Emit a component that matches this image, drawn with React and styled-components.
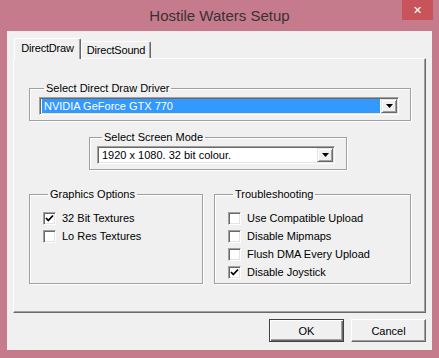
import React from "react";
import styled, { createGlobalStyle } from "styled-components";

const GlobalStyle = createGlobalStyle`
  html, body {
    margin: 0;
    padding: 0;
    background: #c57b8b;
  }
  body {
    font-family: "Liberation Sans", Arial, sans-serif;
    font-size: 11px;
    color: #000;
  }
`;

function CheckMark() {
  return (
    <svg width="9" height="9" viewBox="0 0 9 9">
      <path d="M1 4 L3.3 6.5 L8 1.5" fill="none" stroke="#000" strokeWidth="1.8" />
    </svg>
  );
}

function Arrow() {
  return (
    <svg width="7" height="4" viewBox="0 0 7 4">
      <path d="M0 0 H7 L3.5 4 Z" fill="#000" />
    </svg>
  );
}

function Combo({ value, selected, width }) {
  return (
    <ComboBox width={width}>
      <ComboValue selected={selected}>{value}</ComboValue>
      <DropButton><Arrow /></DropButton>
    </ComboBox>
  );
}

function Option({ label, checked }) {
  return (
    <OptionRow>
      <Check>{checked && <CheckMark />}</Check>
      <span>{label}</span>
    </OptionRow>
  );
}

export default function App() {
  return (
    <>
      <GlobalStyle />
      <Window>
        <TitleBar>
          <Title>Hostile Waters Setup</Title>
          <CloseButton>✕</CloseButton>
        </TitleBar>
        <Client>
          <TabStrip>
            <Tab active>DirectDraw</Tab>
            <Tab>DirectSound</Tab>
          </TabStrip>
          <Panel>
            <Group pl={9} width={382}>
              <Legend>Select Direct Draw Driver</Legend>
              <Combo value="NVIDIA GeForce GTX 770" selected width={360} />
            </Group>
            <Group pl={7} width={258} offset={60} top={10}>
              <Legend>Select Screen Mode</Legend>
              <Combo value="1920 x 1080. 32 bit colour." width={238} />
            </Group>
            <OptionsRow>
              <OptionsGroup>
                <Legend>Graphics Options</Legend>
                <Option label="32 Bit Textures" checked />
                <Option label="Lo Res Textures" />
              </OptionsGroup>
              <OptionsGroup>
                <Legend>Troubleshooting</Legend>
                <Option label="Use Compatible Upload" />
                <Option label="Disable Mipmaps" />
                <Option label="Flush DMA Every Upload" />
                <Option label="Disable Joystick" checked />
              </OptionsGroup>
            </OptionsRow>
          </Panel>
          <ButtonBar>
            <Button primary>OK</Button>
            <Button>Cancel</Button>
          </ButtonBar>
        </Client>
      </Window>
    </>
  );
}

const Window = styled.div`
  width: 439px;
  height: 358px;
  display: flex;
  flex-direction: column;
  background: #c57b8b;
  box-sizing: border-box;
`;

const TitleBar = styled.div`
  height: 31px;
  display: grid;
  grid-template-columns: 1fr auto 1fr;
`;

const Title = styled.div`
  grid-column: 2;
  align-self: center;
  margin-top: -1px;
  font-size: 15px;
  color: #3b3035;
`;

const CloseButton = styled.div`
  grid-column: 3;
  justify-self: end;
  align-self: start;
  width: 31px;
  height: 20px;
  margin-right: 6px;
  background: #c7545b;
  color: #fff;
  font-family: "DejaVu Sans", sans-serif;
  font-size: 11px;
  font-weight: bold;
  display: flex;
  align-items: center;
  justify-content: center;
`;

const Client = styled.div`
  flex: 1;
  margin: 0 7px 8px 7px;
  background: #f0f0f0;
  padding: 7px 6px 8px 6px;
  display: flex;
  flex-direction: column;
`;

const TabStrip = styled.div`
  height: 20px;
  display: flex;
  padding-left: 1px;
`;

const Tab = styled.div`
  box-sizing: border-box;
  width: ${p => (p.active ? 67 : 70)}px;
  height: ${p => (p.active ? 21 : 17)}px;
  margin-top: ${p => (p.active ? 0 : 3)}px;
  position: relative;
  z-index: ${p => (p.active ? 1 : 0)};
  background: #f0f0f0;
  border-top: 1px solid #fff;
  border-left: 1px solid #fff;
  border-right: 1px solid #696969;
  border-radius: 2px 2px 0 0;
  box-shadow: inset -1px 0 0 #a0a0a0;
  display: flex;
  align-items: ${p => (p.active ? "flex-start" : "center")};
  padding-top: ${p => (p.active ? 3 : 0)}px;
  justify-content: center;
  letter-spacing: -0.2px;
`;

const Panel = styled.div`
  box-sizing: border-box;
  height: 255px;
  border-top: 1px solid #fff;
  border-left: 1px solid #fff;
  border-right: 1px solid #696969;
  border-bottom: 1px solid #696969;
  box-shadow: inset -1px -1px 0 #a0a0a0;
  padding: 23px 14px 0 15px;
  display: flex;
  flex-direction: column;
`;

const Group = styled.fieldset`
  box-sizing: border-box;
  margin: ${p => p.top || 0}px 0 0 ${p => p.offset || 0}px;
  width: ${p => p.width}px;
  min-width: 0;
  padding: 3px 11px 5px ${p => p.pl}px;
  border: 1px solid #a0a0a0;
  box-shadow: 1px 1px 0 #fff, inset 1px 1px 0 #fff;
`;

const Legend = styled.legend`
  margin-left: 5px;
  padding: 0 2px;
  line-height: 12px;
  font-size: 11px;
`;

const ComboBox = styled.div`
  box-sizing: border-box;
  width: ${p => p.width}px;
  height: 18px;
  display: flex;
  background: #fff;
  border-top: 1px solid #a0a0a0;
  border-left: 1px solid #a0a0a0;
  border-right: 1px solid #fff;
  border-bottom: 1px solid #fff;
  box-shadow: inset 1px 1px 0 #696969, inset -1px -1px 0 #e3e3e3;
  padding: 1px;
`;

const ComboValue = styled.div`
  flex: 1;
  line-height: 14px;
  padding-left: 2px;
  margin-left: 1px;
  background: ${p => (p.selected ? "#3399ff" : "transparent")};
  color: ${p => (p.selected ? "#fff" : "#000")};
  white-space: nowrap;
`;

const DropButton = styled.div`
  box-sizing: border-box;
  width: 16px;
  margin-left: 1px;
  background: #f0f0f0;
  border-top: 1px solid #e3e3e3;
  border-left: 1px solid #e3e3e3;
  border-right: 1px solid #696969;
  border-bottom: 1px solid #696969;
  box-shadow: inset 1px 1px 0 #fff, inset -1px -1px 0 #a0a0a0;
  display: flex;
  align-items: center;
  justify-content: center;
`;

const OptionsRow = styled.div`
  margin-top: 18px;
  display: grid;
  grid-template-columns: 174px 197px;
  column-gap: 11px;
`;

const OptionsGroup = styled.fieldset`
  box-sizing: border-box;
  height: 96px;
  margin: 0;
  min-width: 0;
  padding: 9px 6px 0 13px;
  border: 1px solid #a0a0a0;
  box-shadow: 1px 1px 0 #fff, inset 1px 1px 0 #fff;
`;

const OptionRow = styled.div`
  height: 18px;
  display: flex;
  align-items: center;
  gap: 6px;
`;

const Check = styled.div`
  box-sizing: border-box;
  width: 13px;
  height: 13px;
  background: #fff;
  border-top: 1px solid #a0a0a0;
  border-left: 1px solid #a0a0a0;
  border-right: 1px solid #fff;
  border-bottom: 1px solid #fff;
  box-shadow: inset 1px 1px 0 #696969, inset -1px -1px 0 #e3e3e3;
  display: flex;
  align-items: center;
  justify-content: center;
`;

const ButtonBar = styled.div`
  margin-top: 6px;
  display: flex;
  justify-content: flex-end;
  gap: 7px;
`;

const Button = styled.div`
  box-sizing: border-box;
  width: 75px;
  height: 23px;
  background: #f0f0f0;
  border: 1px solid ${p => (p.primary ? "#404040" : "#fff")};
  border-right-color: ${p => (p.primary ? "#404040" : "#696969")};
  border-bottom-color: ${p => (p.primary ? "#404040" : "#696969")};
  box-shadow: ${p =>
    p.primary
      ? "inset 1px 1px 0 #fff, inset -1px -1px 0 #696969, inset -2px -2px 0 #a0a0a0"
      : "inset -1px -1px 0 #a0a0a0"};
  display: flex;
  align-items: center;
  justify-content: center;
`;
